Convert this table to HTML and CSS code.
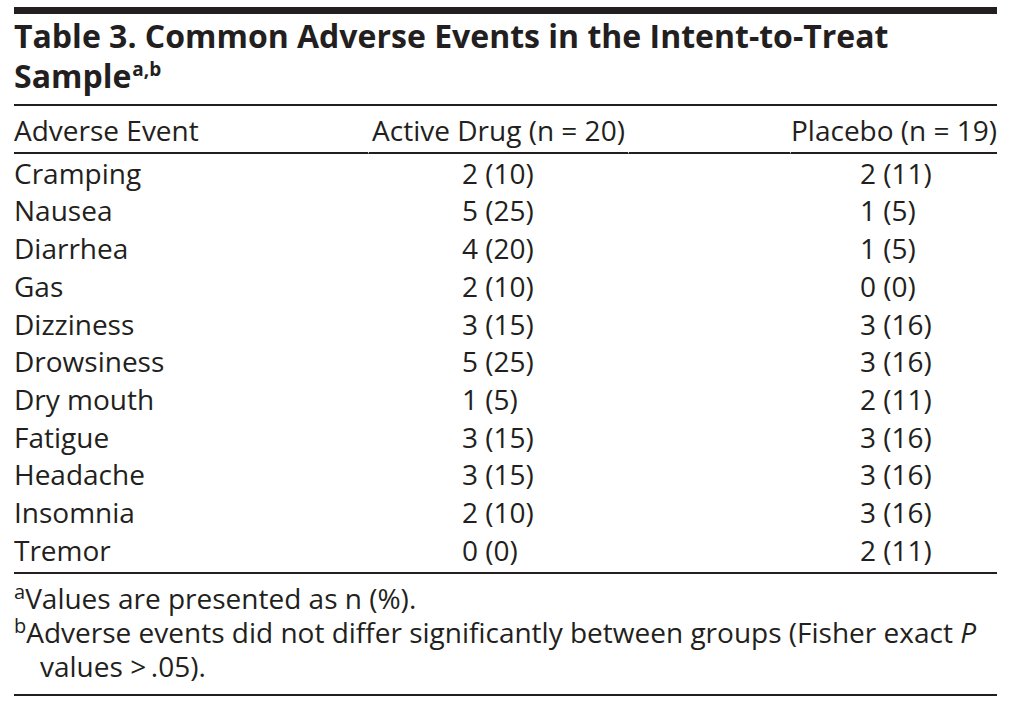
FILE: index.html
```html
<!DOCTYPE html>
<html lang="en">
<head>
<meta charset="utf-8">
<title>Table 3. Common Adverse Events</title>
<link rel="stylesheet" href="styles.css">
</head>
<body>
<div class="page">
  <h1 class="title">Table 3. Common Adverse Events in the Intent-to-Treat<br>Sample<sup class="title-sup">a,b</sup></h1>
  <table class="data">
    <colgroup>
      <col class="col-event">
      <col class="col-active">
      <col class="col-gap">
      <col class="col-placebo">
    </colgroup>
    <thead>
      <tr class="head">
        <th class="cell-event">Adverse Event</th>
        <th class="cell-center">Active Drug (n = 20)</th>
        <th class="cell-gap"></th>
        <th class="cell-center">Placebo (n = 19)</th>
      </tr>
    </thead>
    <tbody>
      <tr class="first"><td>Cramping</td><td class="v1">2 (10)</td><td></td><td class="v2">2 (11)</td></tr>
      <tr><td>Nausea</td><td class="v1">5 (25)</td><td></td><td class="v2">1 (5)</td></tr>
      <tr><td>Diarrhea</td><td class="v1">4 (20)</td><td></td><td class="v2">1 (5)</td></tr>
      <tr><td>Gas</td><td class="v1">2 (10)</td><td></td><td class="v2">0 (0)</td></tr>
      <tr><td>Dizziness</td><td class="v1">3 (15)</td><td></td><td class="v2">3 (16)</td></tr>
      <tr><td>Drowsiness</td><td class="v1">5 (25)</td><td></td><td class="v2">3 (16)</td></tr>
      <tr><td>Dry mouth</td><td class="v1">1 (5)</td><td></td><td class="v2">2 (11)</td></tr>
      <tr><td>Fatigue</td><td class="v1">3 (15)</td><td></td><td class="v2">3 (16)</td></tr>
      <tr><td>Headache</td><td class="v1">3 (15)</td><td></td><td class="v2">3 (16)</td></tr>
      <tr><td>Insomnia</td><td class="v1">2 (10)</td><td></td><td class="v2">3 (16)</td></tr>
      <tr class="last"><td>Tremor</td><td class="v1">0 (0)</td><td></td><td class="v2">2 (11)</td></tr>
    </tbody>
  </table>
  <div class="notes">
    <p class="note"><sup class="note-sup">a</sup>Values are presented as n (%).</p>
    <p class="note"><sup class="note-sup">b</sup>Adverse events did not differ significantly between groups (Fisher exact <i>P</i> values &gt;&#8201;.05).</p>
  </div>
</div>
</body>
</html>
```
FILE: styles.css
```css
html, body {
  margin: 0;
  padding: 0;
  background: #ffffff;
}

body {
  font-family: "Open Sans", "Noto Sans", sans-serif;
  color: #231f20;
}

.page {
  width: 983px;
  margin-left: 14px;
  margin-top: 7px;
  border-top: 7px solid #231f20;
}

.title {
  margin: 0;
  padding-top: 2px;
  padding-bottom: 8px;
  font-size: 32px;
  line-height: 40px;
  font-weight: 700;
  border-bottom: 2px solid #231f20;
}

.title-sup {
  font-size: 19px;
  line-height: 0;
  vertical-align: 0;
  position: relative;
  top: -12px;
  margin-left: 1px;
}

.data {
  width: 983px;
  table-layout: fixed;
  border-collapse: separate;
  border-spacing: 0;
  font-size: 28px;
  line-height: 37.7px;
}

.col-event { width: 354px; }
.col-active { width: 260px; }
.col-gap { width: 162px; }
.col-placebo { width: 207px; }

.data th,
.data td {
  padding: 0;
  font-weight: 400;
  white-space: nowrap;
}

.head th {
  padding-top: 6px;
  padding-bottom: 2px;
  border-bottom: 2px solid #231f20;
}

.head th + th {
  border-left: 1px solid #ffffff;
}

.cell-event { text-align: left; }
.cell-center { text-align: center; }

.data td { text-align: left; }

.data td.v1 { padding-left: 94px; }
.data td.v2 { padding-left: 70px; }

.data tr.first td { padding-top: 1px; }

.data tr.last td {
  padding-bottom: 3px;
  border-bottom: 2px solid #231f20;
}

.notes {
  padding-top: 7px;
  padding-bottom: 11px;
  border-bottom: 2px solid #231f20;
}

.note {
  margin: 0;
  font-size: 28px;
  line-height: 34px;
  padding-left: 26px;
  text-indent: -26px;
}

.note-sup {
  font-size: 20px;
  line-height: 0;
  vertical-align: 0;
  position: relative;
  top: -10px;
}
```
